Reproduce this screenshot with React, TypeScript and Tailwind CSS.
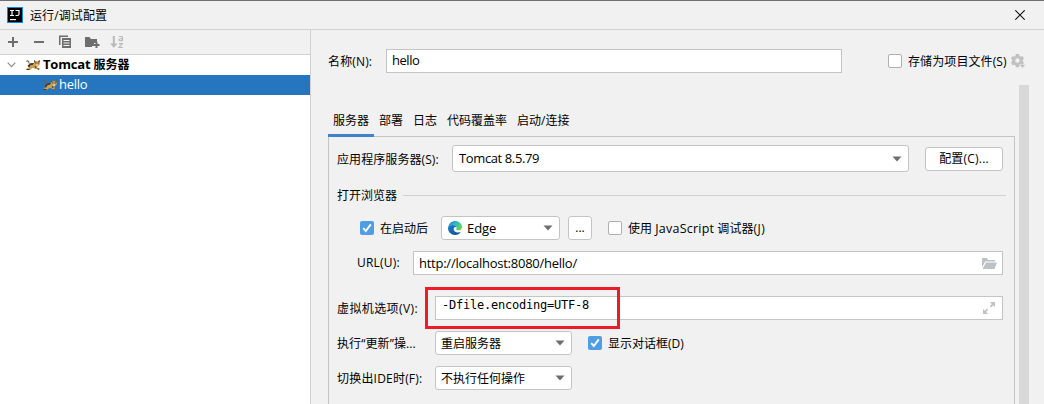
import type { ReactNode } from "react";

const cjk = "font-['Open_Sans','Noto_Sans_CJK_SC',sans-serif]";

function Txt({ children, className = "pt-[2px]" }: { children: ReactNode; className?: string }) {
  return <span className={`block whitespace-pre ${className}`}>{children}</span>;
}

function Caret() {
  return (
    <svg width="10" height="6" viewBox="0 0 10 6">
      <path d="M0.5 0.5h9L5 5.5z" fill="#6e6e6e" />
    </svg>
  );
}

function Check({ checked = false }: { checked?: boolean }) {
  return checked ? (
    <span className="block size-[14px] shrink-0 rounded-[2px] bg-[#4f9ee3]">
      <svg width="14" height="14" viewBox="0 0 14 14">
        <path d="M3.2 7.2l2.6 2.8 5-6.6" fill="none" stroke="#fff" strokeWidth="1.9" />
      </svg>
    </span>
  ) : (
    <span className="block size-[14px] shrink-0 rounded-[2px] border border-[#b0b0b0] bg-white" />
  );
}

function Select({ children, className }: { children: ReactNode; className: string }) {
  return (
    <div className={`flex shrink-0 items-center justify-between rounded-[3px] border border-[#c4c4c4] bg-white pr-[6px] ${className}`}>
      {children}
      <Caret />
    </div>
  );
}

function Cat() {
  return (
    <svg width="14" height="12" viewBox="0 0 14 12">
      <path d="M0.3 2.2C1.8 1.4 3 2.4 3.2 4.6" fill="none" stroke="#6b6350" strokeWidth="1.1" />
      <path d="M1.500 6.800L4.500 4.200l3.500-.2L8 1l1.800 1.200h2L13.700 1l.1 4.300-1.800 1.900L10.500 8l3 1.600-.5 1.200L9 9.800 6.500 8.800 4 11H0.500V9.800L3 8.600z" fill="#cf9f50" />
      <path d="M1.500 6.800L4.500 4.200l3.500-.2L6.800 5.800 4.600 6 3.200 8.500zM8 1l1.600 1.400-1.200 1.200zM13.700 1l-1.500 1.400 1.400 1.100zM8.800 7l2 1-1.600 1.200zM.5 9.900h3V11h-3zM11 9.300l2.500.4-.5 1.200z" fill="#3c3629" />
      <path d="M9.300 4h1M11.700 4h1" stroke="#292929" strokeWidth="1.100" />
      <path d="M10 5.500h2v1h-2z" fill="#f7ebc6" />
    </svg>
  );
}

function Edge() {
  return (
    <svg width="14" height="14" viewBox="0 0 14 14">
      <defs>
        <linearGradient id="edgeTop" x1="0" y1="0" x2="1" y2="0.5">
          <stop offset="0" stopColor="#2380cc" />
          <stop offset="0.5" stopColor="#2fb5d2" />
          <stop offset="1" stopColor="#62d557" />
        </linearGradient>
        <linearGradient id="edgeLow" x1="0" y1="0" x2="1" y2="1">
          <stop offset="0" stopColor="#1b7fcf" />
          <stop offset="1" stopColor="#114a8b" />
        </linearGradient>
      </defs>
      <path d="M.2 6.3C.6 2.6 3.5 0 7.1 0 11 0 14 2.7 14 5.900c0 2-1.500 3.400-3.500 3.400-1.400 0-2.400-.4-2.400-.9 0-.3.5-.6.5-1.400C8.600 5.400 6.800 4 4.600 4 2.500 4 .8 5 .2 6.300z" fill="url(#edgeTop)" />
      <path d="M0 7C.2 5 2.200 4 4.600 4 6.500 4 8 5 8.500 6.200 7.500 5.600 5.600 6.200 5.600 8c0 2.100 1.900 3.500 4.300 3.500 1.200 0 2.200-.3 3-.8C11.800 12.700 9.600 14 7 14 3.100 14 0 10.900 0 7z" fill="url(#edgeLow)" />
    </svg>
  );
}

function Toolbar() {
  return (
    <div className="flex h-[25px] border-b border-[#d1d1d1]">
      <svg width="109" height="24" viewBox="0 30 109 24">
        <g fill="#6e6e6e">
          <path d="M8 41h4v-4h2v4h4v2h-4v4h-2v-4H8zM34 41h10v2H34z" />
          <path d="M59 35.500h9v1.500h-7.500v8H59z" />
          <path fillRule="evenodd" d="M62 38h9v10h-9zM63.500 40v1h6v-1zM63.500 42.500v1h6v-1zM63.500 45v1h6v-1z" />
          <path d="M85 37h4.500l1.500 2h6v4h-3v3h-2v1h-7z" />
          <path d="M94 44h1.500v-2h2v2h2v2h-2v2h-2v-2H93v-2z" />
        </g>
      </svg>
      <svg width="16" height="24" viewBox="109 30 16 24" fill="none" stroke="#b9b9b9">
        <path d="M112.800 36h2v7.500h2.700l-3.700 4.200-3.700-4.200h2.700z" fill="#b9b9b9" stroke="none" />
        <path d="M119 36.500h2.500q1 0 1 1v3.500M122.500 38.800h-2.300q-1.200 0-1.200 1t1.200 1q1.500 0 2.300-.8M118.800 43.600h3.600l-3.400 3.900h3.900" strokeWidth="1.100" />
      </svg>
    </div>
  );
}

function Sidebar() {
  return (
    <aside className="flex w-[311px] shrink-0 flex-col border-r border-[#d1d1d1]">
      <Toolbar />
      <div className="flex-1 bg-white">
        <div className="flex h-5 items-center pl-[7px]">
          <svg width="9" height="6" viewBox="0 0 9 6"><path d="M.7.7l3.800 4L8.300.7" fill="none" stroke="#8c8c8c" strokeWidth="1.200" /></svg>
          <span className="ml-[10px]"><Cat /></span>
          <Txt className="ml-[3px] pb-[2px] text-[13px] leading-[18px] font-bold tracking-[-0.2px]">Tomcat <span className="text-[12px] tracking-normal">服务器</span></Txt>
        </div>
        <div className="flex h-5 items-center bg-[#2675bf] pl-[43px] text-white">
          <Cat />
          <Txt className="ml-[2px] pb-[2px] text-[13px] leading-[18px] tracking-[-0.25px]">hello</Txt>
        </div>
      </div>
    </aside>
  );
}

export default function App() {
  return (
    <div className={`flex h-[404px] w-[1044px] flex-col overflow-hidden bg-[#f1f1f1] text-[12px] leading-[18px] text-black ${cjk}`}>
      <header className="flex h-[30px] items-center justify-between border-t border-b border-t-[#707070] border-b-[#d1d1d1] pr-[19px] pl-[7px]">
        <div className="flex items-center">
          <svg width="16" height="16" viewBox="0 0 16 16">
            <path d="M0 0h16v16H0z" fill="#1686e2" />
            <path d="M1 1h14v14H1z" fill="#000" />
            <path d="M3 3.500h4M5 3.500v5M3 8.500h4M8.500 3.500H12V7q0 1.500-1.500 1.500h-2" fill="none" stroke="#fff" strokeWidth="1.200" />
            <path d="M3 12h6v1.200H3z" fill="#fff" />
          </svg>
          <Txt className="ml-[7px] pt-px tracking-[0.1px]">运行/调试配置</Txt>
        </div>
        <svg width="10" height="10" viewBox="0 0 10 10"><path d="M.3.3l9.400 9.400M9.700.3L.3 9.700" stroke="#111" strokeWidth="1.100" /></svg>
      </header>
      <div className="flex min-h-0 flex-1">
        <Sidebar />
        <main className="flex min-w-0 flex-1 flex-col pl-[17px]">
          <div className="mt-[19px] flex h-6 items-center">
            <Txt className="w-[58px] pt-[2px] tracking-[0.15px]">名称(N):</Txt>
            <div className="h-6 w-[456px] border border-[#c4c4c4] bg-white pl-[5px] text-[13px] leading-5 tracking-[-0.45px]">hello</div>
            <div className="ml-[46px] flex items-center">
              <Check />
              <Txt className="ml-[6px] pt-[2px] tracking-[0.1px]">存储为项目文件(S)</Txt>
              <svg className="ml-[3px]" width="16" height="16" viewBox="0 0 15 15">
                <path d="M5.500 1h3l.4 1.700 1.200.7 1.600-.5 1.400 2.400-1.200 1.200v1.300l1.200 1.200-1.400 2.400-1.600-.5-1.200.7-.4 1.700h-3l-.4-1.700-1.200-.7-1.600.5L.9 9l1.200-1.200V6.500L.9 5.300l1.400-2.400 1.600.5 1.200-.7zM7 5a2.100 2.100 0 1 0 .01 0z" fill="#c1c1c1" fillRule="evenodd" />
                <path d="M9 11h5.500l-2.700 3z" fill="#b4b4b4" stroke="#f1f1f1" strokeWidth=".6" />
              </svg>
            </div>
          </div>
          <div className="mt-[12px] flex min-h-0 flex-1">
            <div className="mt-[21px] flex w-[687px] flex-col">
              <nav className="flex h-[31px] shrink-0 items-start">
                <div className="z-10 h-[31px] w-[46px] border-b-[3px] border-[#4083c9] pt-[4px] pl-[5px]"><Txt>服务器</Txt></div>
                <div className="flex h-[31px] flex-1 gap-[10px] border-b border-[#c4c4c4] pt-[4px] pl-[5px]">
                  <Txt>部署</Txt><Txt>日志</Txt><Txt>代码覆盖率</Txt><Txt>启动/连接</Txt>
                </div>
              </nav>
              <section className="min-h-0 flex-1 border-r border-l border-[#c4c4c4] pl-[8px]">
                <div className="flex h-[43px] items-center">
                  <Txt className="w-[115px] pt-[2px] tracking-[0.08px]">应用程序服务器(S):</Txt>
                  <Select className="h-[27px] w-[457px] pl-[6px] text-[13px]"><Txt className="pb-[2px] tracking-[-0.38px]">Tomcat 8.5.79</Txt></Select>
                  <div className="ml-4 flex h-6 w-[78px] items-center justify-center rounded-[3px] border border-[#c4c4c4] bg-white"><Txt className="pt-px tracking-[0.2px]">配置(C)...</Txt></div>
                </div>
                <div className="mt-[6px] flex h-[18px] items-center">
                  <Txt className="w-[66px] pt-[2px]">打开浏览器</Txt>
                  <div className="h-px w-[603px] bg-[#d1d1d1]" />
                </div>
                <div className="mt-[12px] flex h-6 items-center pl-[23px]">
                  <Check checked />
                  <Txt className="ml-[6px] w-[61px] pt-[2px]">在启动后</Txt>
                  <Select className="h-6 w-[119px] pl-[6px] text-[13px]"><span className="flex items-center gap-[5px]"><Edge /><Txt className="tracking-[-0.05px]">Edge</Txt></span></Select>
                  <div className="mr-4 ml-2 flex h-6 w-6 items-center justify-center rounded-[3px] border border-[#c4c4c4] bg-white">...</div>
                  <Check />
                  <Txt className="ml-[6px] pt-[2px] tracking-[0.05px]">使用 <span className="text-[12.500px] tracking-[0.22px]">JavaScript</span> 调试器<span className="tracking-[0.5px]">(J)</span></Txt>
                </div>
                <div className="mt-[11px] flex h-6 items-center pl-[20px]">
                  <Txt className="w-[56px] tracking-[0.2px]">URL(U):</Txt>
                  <div className="flex h-6 w-[590px] items-center justify-between border border-[#c4c4c4] bg-white pr-[5px] pl-[5px]">
                    <Txt className="pb-px text-[13px] tracking-[-0.25px]">http://localhost:8080/hello/</Txt>
                    <svg width="15" height="11" viewBox="0 0 15 11"><path d="M0 0h5l1 2h7v1.500H3.200L0 9.500zM4 4.500h11L12.500 11H.5z" fill="#bcc1c5" /></svg>
                  </div>
                </div>
                <div className="relative mt-[21px] flex h-6 items-center">
                  <Txt className="w-[98px] pt-[2px] tracking-[0.4px]">虚拟机选项(V):</Txt>
                  <div className="flex h-6 w-[568px] items-center justify-between border border-[#c4c4c4] bg-white pr-[7px] pl-[6px]">
                    <Txt className="pb-[6px] font-['DejaVu_Sans_Mono',monospace] text-[12px] tracking-[-0.22px]">-Dfile.encoding=UTF-8</Txt>
                    <svg width="12" height="12" viewBox="0 0 12 12"><path d="M7 0h5v5l-1.800-1.800L8 5.400 6.800 4.200 8.900 1.900zM0 7l1.800 1.800L4 6.600l1.200 1.200L3.100 10.100 5 12H0z" fill="#bcc1c5" /></svg>
                  </div>
                  <div className="absolute top-[-9px] left-[88px] h-[42px] w-[195px] border-[3px] border-[#ed1c24]" />
                </div>
                <div className="mt-[11px] flex h-6 items-center">
                  <Txt className="w-[98px] pt-px tracking-[0.1px]">执行“更新”操...</Txt>
                  <Select className="h-6 w-[137px] pl-[5px]"><Txt>重启服务器</Txt></Select>
                  <div className="ml-4 flex items-center gap-[6px]"><Check checked /><Txt>显示对话框(D)</Txt></div>
                </div>
                <div className="mt-[11px] flex h-6 items-center">
                  <Txt className="w-[98px] pt-px tracking-[0.2px]">切换出IDE时(F):</Txt>
                  <Select className="h-6 w-[137px] pl-[5px]"><Txt>不执行任何操作</Txt></Select>
                </div>
              </section>
            </div>
            <div className="ml-[4px] w-[10px] bg-[#d8d8d8]" />
          </div>
        </main>
      </div>
    </div>
  );
}
